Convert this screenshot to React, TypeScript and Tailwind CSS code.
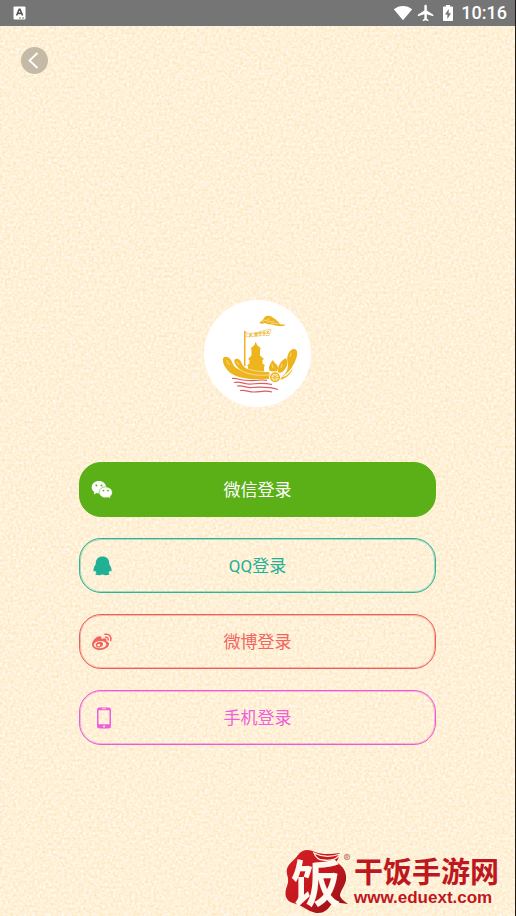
import type { ReactNode } from "react";

const cjk = "font-['Roboto','Noto_Sans_CJK_SC',sans-serif]";

function PaperTexture() {
  return (
    <svg className="absolute inset-0 -z-10 h-full w-full" aria-hidden="true">
      <filter id="paper" x="0" y="0" width="100%" height="100%" colorInterpolationFilters="sRGB">
        <feTurbulence type="fractalNoise" baseFrequency="0.37" numOctaves="4" seed="12" />
        <feColorMatrix
          values="0.03 0 0 0 0.983
                  0.12 0.04 0 0 0.863
                  0.3 0.08 0.06 0 0.623
                  0 0 0 0 1"
        />
      </filter>
      <rect width="100%" height="100%" filter="url(#paper)" />
    </svg>
  );
}

function StatusBar() {
  return (
    <header className="flex h-[26px] items-center justify-between bg-[#757575] pr-2 pl-[13px] text-white">
      <svg width="13" height="14" viewBox="0 0 13 14" aria-hidden="true">
        <rect x="0.5" y="0.5" width="12" height="13" rx="1" fill="#fff" />
        <path d="M3.6 9.500 6.200 3.200h.8L9.600 9.500M4.600 7.400h4" fill="none" stroke="#555" strokeWidth="1.600" />
        <path d="M6 12h2M9 12h2" stroke="#777" strokeWidth="1" />
      </svg>
      <div className="flex items-center">
        <svg width="20" height="16" viewBox="0 0 20 16" fill="#fff" aria-label="Wi-Fi">
          <path d="M.8 4.300C6-.2 14-.2 19.200 4.300L10 15.300Z" />
        </svg>
        <svg className="ml-1" width="18" height="18" viewBox="1 1 22 22" fill="#fff" aria-label="Airplane mode">
          <path d="M21 16v-2l-8-5V3.500C13 2.670 12.330 2 11.500 2S10 2.670 10 3.500V9l-8 5v2l8-2.500V19l-2 1.500V22l3.500-1 3.500 1v-1.500L13 19v-5.500Z" />
        </svg>
        <svg className="ml-2" width="10" height="16" viewBox="0 0 10 16" aria-label="Battery charging">
          <path d="M3 0h4v1.600h2.200q.8 0 .8.800v12.800q0 .8-.8.800H.8Q0 16 0 15.200V2.400q0-.8.800-.8H3Z" fill="#fff" />
          <path d="M5.700 4 2 9.500h2.400V14L8 8.300H5.700Z" fill="#757575" />
        </svg>
        <time className="ml-2 font-['Roboto',sans-serif] text-lg leading-[26px] font-medium">10:16</time>
      </div>
    </header>
  );
}

function BoatLogo() {
  return (
    <svg viewBox="0 0 107 107" className="h-[107px] w-[107px]" role="img" aria-label="Boat with pagoda">
      <circle cx="53.500" cy="53.500" r="53.500" fill="#fff" />
      <g fill="#edb41e">
        <path d="M55.500 23c1-2 3-2 4-4 1-3 4-4 6-3 3 0 4 3 6 3 1 2 4 3 4 5 2 1 5 0 6 1-3 2-8 1-12 0-4-1-6 0-9-2-2 1-3 1-5 0Z" />
        <path d="M40 31h1.500v35H40z" />
        <path d="M51.700 41.500 53 45l4 3.500-1 1v6L60 59l-1.500 1v3.500l2.500 2-1 1V73H44v-6.500l-1-1 2.500-2V60L44 59l3.500-3.500v-6l-1-1 4-3.500Z" />
        <path d="M19 59c0-2 3-3 5.500-1.500C28 59.500 28 64 31 67c4 4 15 6 35 6 1 1 0 4-1 6-14 1-27 0-35-4-7-3-12-12-11-16Z" />
        <path d="M30 61c0-3 4-3.500 6-1 2 2 2 5 5 7.500 5 3 13 4 25 4.500l-1 3c-13 1-25-1-31-7-2-2-4-5-4-7Z" stroke="#fff" strokeWidth=".5" />
        <path d="M65 67c1-3 2-5 4-7 1 3 4 4 5 7 0 3-1 5-3 5l-5-1c-1-1-1-2-1-4Z" />
        <path d="M74 73c-1-6 2-12 8-15 2 4 2 8-1 11-2 3-4 4-7 4Z" />
        <path d="M77 77c6-4 7-8 7-13-2-6 0-13 5-15 5-1 5 5 3 10-3 8-8 15-15 18Z" />
        <path d="M75 78c7-1 10-4 14-10-2 6-7 11-14 12Z" />
      </g>
      <g fill="none" stroke="#fff" strokeWidth=".5">
        <path d="m58 22 3-2 2 1 2-3m-3 6 3-3 3 1 2-1m-3 3 4-1 3 1" />
        <path d="M23 60c0 2 1 4 3 5m7-3 2 3m33-1 1 4m9-4-1 4m10-15-1 4" />
      </g>
      <circle cx="71" cy="77.300" r="6" fill="#fff" />
      <circle cx="71" cy="77.300" r="4.300" fill="#fff6da" stroke="#edb41e" strokeWidth="1.500" />
      <path d="M71 73v8.600M66.700 77.300h8.600M68 74.300l6 6M74 74.300l-6 6" stroke="#edb41e" strokeWidth=".9" />
      <path d="M41 32c8 4 15-2 26-2.500l-2 6c-9-1-16 2.500-24 1l2-2.500Z" fill="#fffaf0" stroke="#edbd45" strokeWidth=".6" />
      <path d="m45 34 3 2m-.500-3-2 4m4.500-3.500 4 0m-2-1v4m-2-1.500 4 0m2-3.500v4m-2-2.500 4 0m2-2v4m-2-2 4 0m1-2 1.500 3m0-3-2 3" stroke="#e8b12d" strokeWidth=".9" />
      <g fill="none" stroke="#dc5c60" strokeWidth="1.200">
        <path d="M28 78.500c4-1 6 1 11 1.500s8 1 12 .5 8-1 12 0" />
        <path d="M30 82.500c6-1.500 8 1 14 1.500s12-2 24 .5" />
        <path d="M33 86c7-1 8 2 15 1.500s16-1 26 2" />
        <path d="M36 90.500c6-1 8 1.500 14 1.500s11-2 18 0" />
      </g>
    </svg>
  );
}

function WeChatIcon() {
  return (
    <svg width="22" height="20" viewBox="0 0 22 20" aria-hidden="true">
      <path d="M8 1C3.800 1 .7 3.700.7 7.200c0 2 1 3.700 2.700 4.900L2.700 14.500l2.800-1.400c.9.2 1.700.4 2.700.3 5-.1 7.300-3 7-6.500C15 3.700 12 1 8 1Z" fill="#fff" />
      <path d="M14.700 6.900c3.700 0 6.600 2.400 6.600 5.500 0 1.800-.9 3.200-2.300 4.300l.5 1.900-2.300-1.100c-.8.2-1.600.3-2.500.3-3.700 0-6.600-2.400-6.600-5.400s2.900-5.500 6.600-5.500Z" fill="#fff" stroke="#5bb018" strokeWidth=".6" />
      <g fill="#5bb018">
        <circle cx="5.400" cy="5.400" r="1" />
        <circle cx="10.500" cy="5.400" r="1" />
        <circle cx="12.500" cy="10.600" r=".9" />
        <circle cx="17" cy="10.600" r=".9" />
      </g>
    </svg>
  );
}

function QQIcon() {
  return (
    <svg width="22" height="20" viewBox="0 0 22 20" fill="currentColor" aria-hidden="true">
      <path d="M11.500.6C7.300.6 5 3.300 4.800 7L4.600 8.500C3.100 10.500 2.200 13 2.400 15c.2.800 1 .5 1.600-.6.300 1 .8 1.800 1.600 2.500-1.300.5-1.500 2 .2 2.200 2 .3 4.400.1 5.700-.8 1.300.9 3.700 1.100 5.700.8 1.700-.2 1.500-1.700.2-2.200.8-.7 1.300-1.500 1.600-2.500.6 1.100 1.400 1.400 1.600.6.200-2-.7-4.500-2.200-6.500L18.200 7c-.2-3.700-2.500-6.400-6.700-6.400Z" />
    </svg>
  );
}

function WeiboIcon() {
  return (
    <svg width="22" height="20" viewBox="0 0 22 20" aria-hidden="true">
      <path fill="currentColor" fillRule="evenodd" d="M8.500 4.200C5.500 4.200 1 8.700 1 12.500 1 16 5 18 9 18c5 0 9-2.900 9-5.900 0-1.700-1.300-2.500-2.600-2.900.7-2.600-1-3.600-5-2.200.4-1.500 0-2.800-1.900-2.800ZM9 9c3.500-.3 6.200 1.300 6.300 3.200.1 2-2.600 3.700-6.100 4-3.400.2-6.200-1.200-6.300-3.200S5.600 9.300 9 9Z" />
      <path fill="currentColor" fillRule="evenodd" d="M8.500 9.800c-2.500.2-4 1.800-3.700 3.600.2 1.500 1.900 2.400 3.900 2 2.200-.4 3.800-2.200 3.300-3.900-.4-1.200-1.800-1.900-3.500-1.700Zm-.8 2.200c1 0 1.600.5 1.500 1.200-.1.800-.9 1.300-1.700 1.200s-1.300-.6-1.200-1.200c.1-.7.700-1.200 1.400-1.200Z" />
      <path d="M14 2.300c4-.8 6.800 2.200 5.600 6.200M14.500 5.200c1.800-.3 3 .9 2.600 2.700" fill="none" stroke="currentColor" strokeWidth="1.500" strokeLinecap="round" />
    </svg>
  );
}

function PhoneIcon() {
  return (
    <svg width="22" height="22" viewBox="-1 0 22 22" aria-hidden="true">
      <path fill="currentColor" fillRule="evenodd" d="M7.500.5h9Q19 .5 19 3v16q0 2.500-2.500 2.500h-9Q5 21.500 5 19V3Q5 .5 7.500.5ZM6.500 3.200v14h11v-14ZM10 1.600v.6h4v-.6ZM12 18.400a1 1 0 1 0 0 2 1 1 0 0 0 0-2Z" />
    </svg>
  );
}

function LoginButton({ icon, label, tone }: { icon: ReactNode; label: string; tone: string }) {
  return (
    <button
      type="button"
      className={`grid h-[55px] w-full grid-cols-[22px_1fr_22px] items-center rounded-[22px] border px-[11px] text-[17px] leading-6 ring-1 ring-inset ${tone}`}
    >
      {icon}
      <span>{label}</span>
    </button>
  );
}

function SiteMark() {
  return (
    <footer className="mt-auto flex items-center justify-end pr-4 pb-px text-[#bd1820]">
      <svg width="70" height="66" viewBox="0 0 70 66" className="overflow-visible" role="img" aria-label="饭">
        <defs>
          <linearGradient id="seal" x1="0" y1="0" x2="1" y2="1">
            <stop offset="0" stopColor="#d42024" />
            <stop offset=".5" stopColor="#c4181e" />
            <stop offset="1" stopColor="#8f1016" />
          </linearGradient>
        </defs>
        <path d="M14 6C18 0 25 0 31 3c8 3 17 2 25 1-1 4-2 7-4 9 7 4 11 10 10 18-1 6-6 11-6 16 1 3 4 5 8 8l-15-2c-4 6-8 12-17 11C23 62 18 56 9 54 1 52 0 44 3 37c2-5 1-8 0-12C1 16 9 13 14 6Z" fill="url(#seal)" />
        <text x="7" y="53" fill="#fff9ef" fontSize="50" fontWeight="700" fontFamily="'Noto Sans CJK SC', sans-serif">饭</text>
        <path d="M30 4c8 4 18 4 26 1-3 6-9 7-17 6-4 0-7-2-9-7Z" fill="#c4181e" stroke="#fff5e7" strokeWidth="1.300" />
        <circle cx="63" cy="8" r="2.800" fill="none" stroke="#ad6258" strokeWidth=".7" />
        <path d="M62 10V6.500h1.200q1 0 1 .9t-1 .9H62m1.200 0 1 1.700" fill="none" stroke="#ad6258" strokeWidth=".6" />
      </svg>
      <div className="flex flex-col gap-[2px]">
        <strong className="font-['Noto_Sans_CJK_SC',sans-serif] text-[29px] leading-[29px] font-bold">干饭手游网</strong>
        <a href="#site" className="font-['Liberation_Sans',sans-serif] text-[17px] leading-[22px] font-bold">www.eduext.com</a>
      </div>
    </footer>
  );
}

export default function App() {
  return (
    <div className={`relative isolate flex min-h-screen flex-col border-r border-[#1b1a18] bg-[#fef0d5] ${cjk}`}>
      <PaperTexture />
      <StatusBar />
      <nav className="flex px-[21px] pt-[21px]">
        <button type="button" aria-label="返回" className="flex h-[27px] w-[27px] items-center justify-center rounded-full bg-[#c5baa5]">
          <svg width="27" height="27" viewBox="0 0 27 27" fill="none" aria-hidden="true">
            <path d="M16.500 6 8.500 13.500l8 7.500" stroke="#fff" strokeWidth="1.800" />
          </svg>
        </button>
      </nav>
      <main className="flex flex-col items-center px-[79px] pt-[226px]">
        <BoatLogo />
        <div className="mt-[55px] flex w-full flex-col gap-[21px]">
          <LoginButton icon={<WeChatIcon />} label="微信登录" tone="border-[#5bb018] bg-[#5bb018] text-white ring-[#5bb018]" />
          <LoginButton icon={<QQIcon />} label="QQ登录" tone="border-[#2db397] text-[#1fb095] ring-[#2db397]/40" />
          <LoginButton icon={<WeiboIcon />} label="微博登录" tone="border-[#ec5f5b] text-[#f2645f] ring-[#ec5f5b]/40" />
          <LoginButton icon={<PhoneIcon />} label="手机登录" tone="border-[#ea5bd5] text-[#ef5fd9] ring-[#ea5bd5]/40" />
        </div>
      </main>
      <SiteMark />
    </div>
  );
}
